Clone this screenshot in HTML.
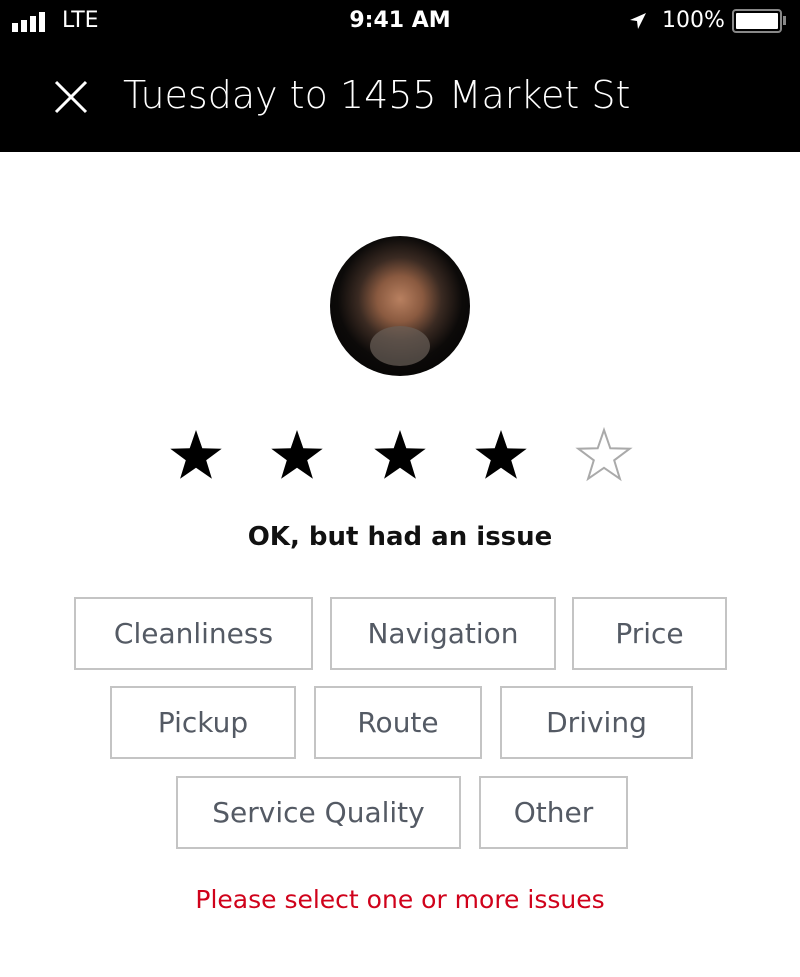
<!DOCTYPE html>
<html><head><meta charset="utf-8"><style>
*{margin:0;padding:0;box-sizing:border-box}
body{width:800px;height:977px;background:#fff;font-family:"DejaVu Sans","Liberation Sans",sans-serif;position:relative;overflow:hidden}
.hdr{position:absolute;left:0;top:0;width:800px;height:152px;background:#000;color:#fff}
.b{position:absolute;border:2px solid #c4c4c4;color:#545a64;font-size:28px;display:flex;align-items:center;justify-content:center;height:73px}
</style></head><body>
<div class="hdr">
 <div style="position:absolute;left:12px;top:12px;display:flex;align-items:flex-end;gap:3px">
  <div style="width:6px;height:9px;background:#fff"></div><div style="width:6px;height:12px;background:#fff"></div><div style="width:6px;height:16px;background:#fff"></div><div style="width:6px;height:20px;background:#fff"></div>
 </div>
 <div style="position:absolute;left:62px;top:8px;font-size:22px">LTE</div>
 <div style="position:absolute;left:0;width:800px;text-align:center;top:8px;font-size:22px;font-weight:bold">9:41 AM</div>
 <svg style="position:absolute;left:628px;top:11px" width="20" height="20" viewBox="0 0 20 20"><path d="M18 2 L2 9 L9 10 L10 18 Z" fill="#fff"/></svg>
 <div style="position:absolute;left:662px;top:8px;font-size:22px">100%</div>
 <div style="position:absolute;left:732px;top:9px;width:50px;height:24px;border:2px solid #888;border-radius:4px;padding:2px"><div style="width:100%;height:100%;background:#fff;border-radius:1px"></div></div>
 <div style="position:absolute;left:783px;top:16px;width:3px;height:9px;background:#888"></div>
 <svg style="position:absolute;left:54px;top:80px" width="34" height="34" viewBox="0 0 34 34"><path d="M2 2L32 32M32 2L2 32" stroke="#fff" stroke-width="3"/></svg>
 <div style="position:absolute;left:123px;top:73px;font-size:38px;font-weight:300">Tuesday to 1455 Market St</div>
</div>
<div style="position:absolute;left:330px;top:236px;width:140px;height:140px;border-radius:50%;background:radial-gradient(circle at 50% 45%,#b88060 0,#8a5a40 22%,#3a2a22 40%,#0c0a09 60%,#000 100%);overflow:hidden">
 <div style="position:absolute;left:40px;top:90px;width:60px;height:40px;border-radius:50%;background:#6a6058;opacity:.7"></div>
</div>
<svg style="position:absolute;left:0;top:425px" width="800" height="65" viewBox="0 0 800 65">
 <defs><polygon id="s" points="0,-27 6.3,-8.7 25.7,-8.3 10.2,3.3 15.9,21.8 0,10.8 -15.9,21.8 -10.2,3.3 -25.7,-8.3 -6.3,-8.7"/></defs>
 <use href="#s" x="196" y="32" fill="#000"/>
 <use href="#s" x="297" y="32" fill="#000"/>
 <use href="#s" x="400" y="32" fill="#000"/>
 <use href="#s" x="501" y="32" fill="#000"/>
 <use href="#s" x="604" y="32" fill="none" stroke="#aaa" stroke-width="2"/>
</svg>
<div style="position:absolute;left:0;width:800px;top:522px;text-align:center;font-size:26px;font-weight:bold;color:#111">OK, but had an issue</div>
<div class="b" style="left:74px;top:597px;width:239px">Cleanliness</div>
<div class="b" style="left:330px;top:597px;width:226px">Navigation</div>
<div class="b" style="left:572px;top:597px;width:155px">Price</div>
<div class="b" style="left:110px;top:686px;width:186px">Pickup</div>
<div class="b" style="left:314px;top:686px;width:168px">Route</div>
<div class="b" style="left:500px;top:686px;width:193px">Driving</div>
<div class="b" style="left:176px;top:776px;width:285px">Service Quality</div>
<div class="b" style="left:479px;top:776px;width:149px">Other</div>
<div style="position:absolute;left:0;width:800px;top:885px;text-align:center;font-size:25px;color:#d0021b">Please select one or more issues</div>
</body></html>
